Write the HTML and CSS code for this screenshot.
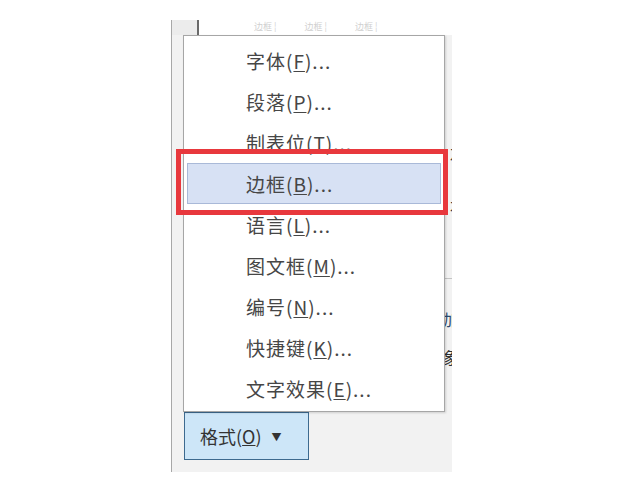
FILE: index.html
```html
<!DOCTYPE html>
<html lang="zh-CN">
<head>
    <meta charset="UTF-8">
    <title>格式菜单</title>
    <link rel="stylesheet" href="styles.css">
</head>
<body>
    <div class="stage">
        <div class="panel">
            <div class="topbar">
                <div class="gutter"></div>
                <div class="labels">
                    <span>边框 ¦</span>
                    <span>边框 ¦</span>
                    <span>边框 ¦</span>
                </div>
            </div>

            <div class="content">
                <!-- dialog content that the menu covers, only the right edge peeks out -->
                <div class="under">
                    <div class="peek peek-a">左</div>
                    <div class="peek peek-b">右</div>
                    <div class="rule"></div>
                    <div class="peek peek-c">加</div>
                    <div class="peek peek-d">象</div>
                </div>

                <ul class="menu">
                    <li>字体(<u>F</u>)...</li>
                    <li>段落(<u>P</u>)...</li>
                    <li>制表位(<u>T</u>)...</li>
                    <li class="active">边框(<u>B</u>)...</li>
                    <li>语言(<u>L</u>)...</li>
                    <li>图文框(<u>M</u>)...</li>
                    <li>编号(<u>N</u>)...</li>
                    <li>快捷键(<u>K</u>)...</li>
                    <li>文字效果(<u>E</u>)...</li>
                </ul>

                <div class="callout"></div>
            </div>

            <div class="actions">
                <button class="format-btn">格式(<u>O</u>) <span class="caret">▼</span></button>
            </div>
        </div>
    </div>
</body>
</html>
```

FILE: styles.css
```css
body {
    margin: 0;
    background: #fff;
    font-family: "Noto Sans CJK SC", "Noto Sans", sans-serif;
    color: #444;
}
.stage {
    padding: 20px 0 0 171px;
}
.panel {
    width: 280px;
    height: 452px;
    border-left: 1px solid #a8a8a8;
    background: #f2f2f2;
    overflow: hidden;
}
.topbar {
    display: flex;
    height: 15px;
    background: #fff;
}
.gutter {
    width: 25px;
    background: #ececec;
    border-right: 2px solid #6a6a6a;
}
.labels {
    display: flex;
    align-items: flex-start;
    gap: 28px;
    padding-left: 55px;
    font-size: 9px;
    line-height: 14px;
    color: #d0d0d0;
    white-space: nowrap;
}
.content {
    position: relative;
    display: flow-root;
    height: 377px;
}
.under {
    display: flow-root;
    padding-left: 271px;
    font-size: 16px;
    line-height: 16px;
}
.peek {
    white-space: nowrap;
    color: #333;
}
.peek-a {
    margin-top: 110px;
    padding-left: 7px;
}
.peek-b {
    margin-top: 37px;
    padding-left: 7px;
}
.rule {
    margin-top: 64px;
    height: 1px;
    background: #c4c4c4;
}
.peek-c {
    margin-top: 32px;
    color: #2d4a6e;
}
.peek-d {
    margin-top: 22px;
}
.menu {
    position: absolute;
    top: 0;
    left: 11px;
    width: 258px;
    margin: 0;
    padding: 4px 1px 2px;
    list-style: none;
    background: #fff;
    border: 1px solid #a6a6a6;
    box-shadow: 1px 1px 2px rgba(0, 0, 0, 0.15);
}
.menu li {
    height: 39px;
    margin: 0 2px;
    padding-left: 58px;
    border: 1px solid transparent;
    font-size: 19px;
    line-height: 39px;
    letter-spacing: 1px;
    color: #464646;
}
.menu li.active {
    background: #d7e1f4;
    border-color: #a9b9d8;
}
.menu u {
    text-underline-offset: 2px;
}
.callout {
    position: absolute;
    top: 114px;
    left: 4px;
    width: 262px;
    height: 56px;
    border: 5px solid #e8383d;
}
.actions {
    padding-left: 12px;
}
.format-btn {
    width: 125px;
    height: 48px;
    padding: 0 0 0 15px;
    text-align: left;
    background: #cde6f8;
    border: 1px solid #3d6a8f;
    border-radius: 0;
    font-family: inherit;
    font-size: 18px;
    color: #333;
}
.caret {
    font-size: 10px;
    margin-left: 6px;
    vertical-align: 3px;
}
```
